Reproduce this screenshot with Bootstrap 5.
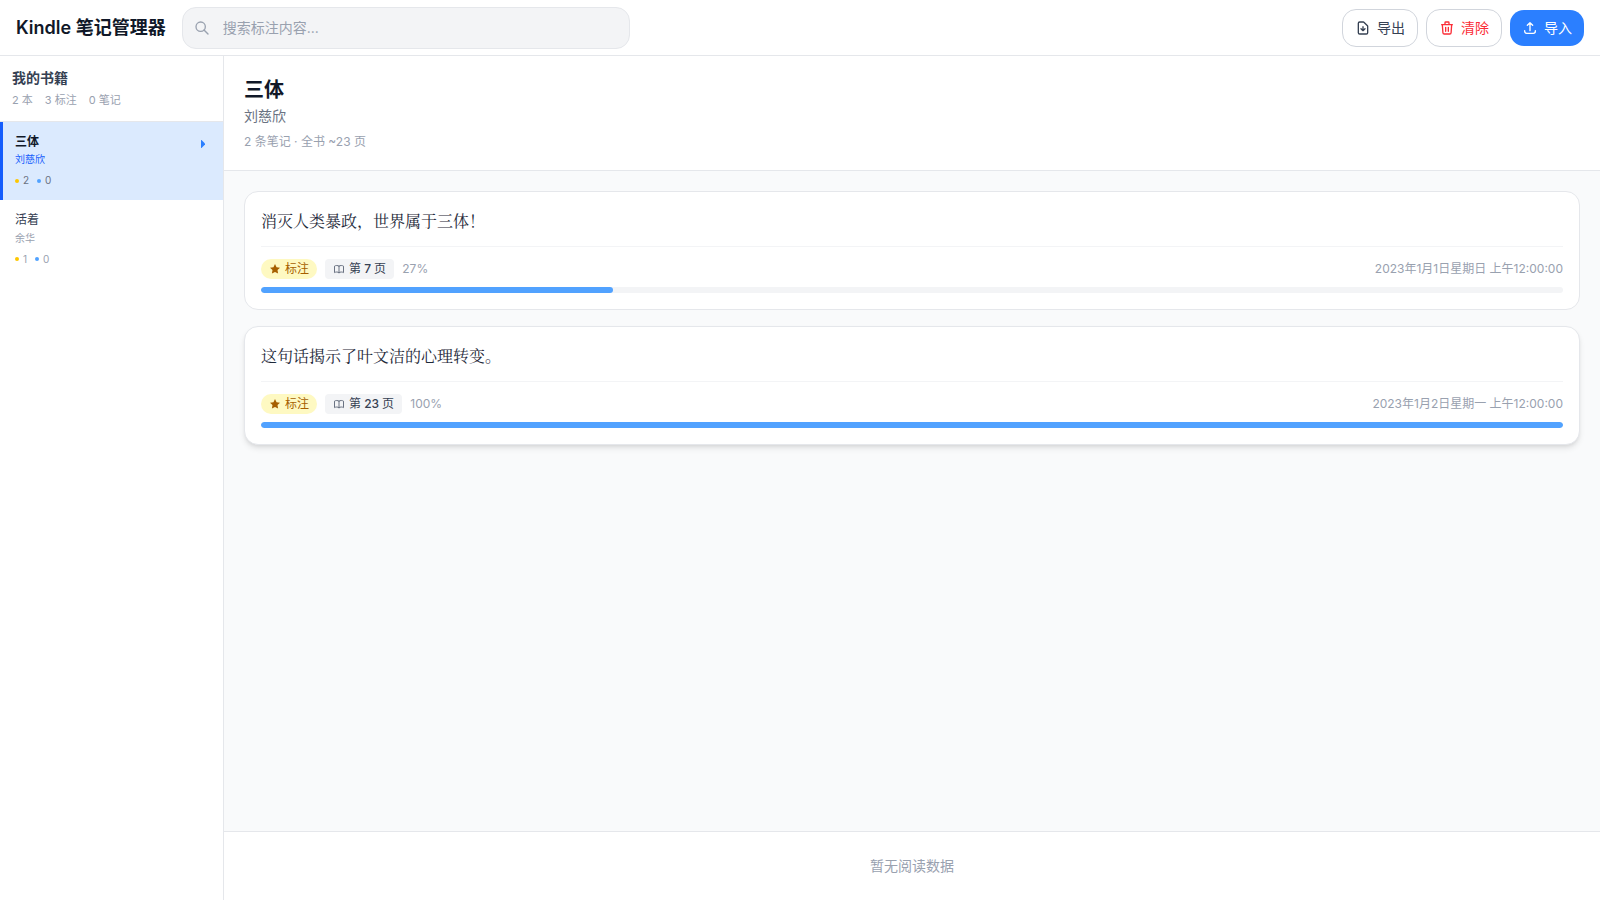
<!DOCTYPE html>
<html lang="zh-CN">
<head>
<meta charset="utf-8">
<meta name="viewport" content="width=device-width, initial-scale=1">
<title>Kindle 笔记管理器</title>
<link href="https://cdn.jsdelivr.net/npm/bootstrap@5.3.0/dist/css/bootstrap.min.css" rel="stylesheet">
<style>
body{font-family:Inter,"Noto Sans CJK SC",sans-serif;font-size:14px;line-height:20px;color:#101828}
svg{display:block;flex:none}
.app-header{height:56px;border-bottom:1px solid #e5e7eb}
.brand{font-size:18px;line-height:28px;font-weight:600}
.search-box{width:448px;height:42px;background:#f3f4f6;border:1px solid #e5e7eb;border-radius:14px;padding:0 11px;gap:13px;color:#99a1af}
.search-box input{color:#364153;font-size:14px;line-height:20px}
.search-box input::placeholder{color:#99a1af;opacity:1}
.tool-btn{--bs-btn-padding-x:12px;--bs-btn-padding-y:8px;--bs-btn-font-size:14px;--bs-btn-line-height:20px;--bs-btn-border-radius:14px;--bs-btn-color:#364153;--bs-btn-border-color:#d1d5dc;--bs-btn-bg:#fff;gap:6px}
.tool-danger{--bs-btn-color:#fb2c36}
.tool-primary{--bs-btn-color:#fff;--bs-btn-bg:#2b7fff;border:0}
.sidebar{width:224px;border-right:1px solid #e5e7eb}
.side-head{padding:12px;border-bottom:1px solid #e5e7eb}
.side-title{font-weight:600;color:#364153}
.side-stats{font-size:11px;line-height:16.5px;color:#99a1af;gap:12px;margin-top:4px}
.book{border-left:3px solid transparent;padding:11px 12px 10px;height:78.5px;color:#364153}
.book-title{font-size:12px;line-height:18px}
.book-author{font-size:10px;line-height:15px;color:#99a1af;margin-top:1.5px}
.book-stats{font-size:10px;line-height:15px;color:#99a1af;gap:8px;margin-top:6px}
.book-active{background:#dbeafe;border-left-color:#155dfc;color:#101828}
.book-active .book-title{font-weight:600}
.book-active .book-author{color:#155dfc}
.book-active .book-stats{color:#6a7282}
.chevron{margin:7.5px 6px 0 0}
.dot{width:4px;height:4px;border-radius:50%;background:#fdc700}
.dot-blue{background:#51a2ff}
.detail-head{padding:20px;border-bottom:1px solid #e5e7eb}
.detail-title{font-size:20px;line-height:28px;font-weight:700}
.detail-author{color:#6a7282;margin-top:2px}
.detail-meta{font-size:12px;line-height:16px;color:#99a1af}
.notes{background:#f9fafb;padding:20px;gap:16px}
.note{background:#fff;border:1px solid #e5e7eb;border-radius:14px;padding:16px}
.note-raised{box-shadow:0 4px 6px -1px rgba(0,0,0,.1),0 2px 4px -2px rgba(0,0,0,.1)}
.quote{font-family:"Noto Serif CJK SC","Noto Serif SC",serif;font-size:16px;line-height:26px;color:#1e2939}
.note-meta{border-top:1px solid #f3f4f6;margin-top:12px;padding-top:12px;gap:8px;font-size:12px;line-height:16px;color:#99a1af}
.tag{height:20px;padding:0 8px;gap:4px}
.tag-mark{background:#fef9c2;color:#a65f00;border-radius:10px}
.tag-page{background:#f3f4f6;color:#364153;border-radius:4px;font-weight:500;font-family:Inter,sans-serif}
.track{--bs-progress-height:6px;--bs-progress-bg:#f3f4f6;--bs-progress-bar-bg:#51a2ff;--bs-progress-border-radius:3px;margin-top:8px}
.track .progress-bar{border-radius:3px}
.stats-foot{border-top:1px solid #e5e7eb;padding:24px;color:#99a1af}
</style>
</head>
<body>
<div class="vh-100 d-flex flex-column overflow-hidden">
  <header class="app-header d-flex align-items-center px-3 gap-3 flex-shrink-0">
    <div class="brand">Kindle 笔记管理器</div>
    <label class="search-box d-flex align-items-center">
      <svg width="16" height="16" viewBox="0 0 24 24" fill="none" stroke="currentColor" stroke-width="2" stroke-linecap="round"><circle cx="10" cy="10" r="7"/><path d="M21 21l-6-6"/></svg>
      <input class="border-0 bg-transparent p-0 flex-grow-1" type="text" placeholder="搜索标注内容...">
    </label>
    <div class="d-flex align-items-center gap-2 ms-auto">
      <button class="btn tool-btn d-flex align-items-center"><svg width="16" height="16" viewBox="0 0 24 24" fill="none" stroke="currentColor" stroke-width="2" stroke-linecap="round" stroke-linejoin="round"><path d="M12 10v6m0 0l-3-3m3 3l3-3m2 8H7a2 2 0 01-2-2V5a2 2 0 012-2h5.586a1 1 0 01.707.293l5.414 5.414a1 1 0 01.293.707V19a2 2 0 01-2 2z"/></svg>导出</button>
      <button class="btn tool-btn tool-danger d-flex align-items-center"><svg width="16" height="16" viewBox="0 0 24 24" fill="none" stroke="currentColor" stroke-width="2" stroke-linecap="round" stroke-linejoin="round"><path d="M19 7l-.867 12.142A2 2 0 0116.138 21H7.862a2 2 0 01-1.995-1.858L5 7m5 4v6m4-6v6m1-10V4a1 1 0 00-1-1h-4a1 1 0 00-1 1v3M4 7h16"/></svg>清除</button>
      <button class="btn tool-btn tool-primary d-flex align-items-center"><svg width="16" height="16" viewBox="0 0 24 24" fill="none" stroke="currentColor" stroke-width="2" stroke-linecap="round" stroke-linejoin="round"><path d="M4 16v1a3 3 0 003 3h10a3 3 0 003-3v-1m-4-8l-4-4m0 0L8 8m4-4v12"/></svg>导入</button>
    </div>
  </header>
  <div class="d-flex flex-grow-1 overflow-hidden">
    <aside class="sidebar flex-shrink-0">
      <div class="side-head">
        <div class="side-title">我的书籍</div>
        <div class="side-stats d-flex"><span>2 本</span><span>3 标注</span><span>0 笔记</span></div>
      </div>
      <div class="book book-active d-flex">
        <div class="flex-grow-1">
          <div class="book-title">三体</div>
          <div class="book-author">刘慈欣</div>
          <div class="book-stats d-flex"><span class="d-flex align-items-center gap-1"><i class="dot"></i>2</span><span class="d-flex align-items-center gap-1"><i class="dot dot-blue"></i>0</span></div>
        </div>
        <svg class="chevron" width="4" height="8" viewBox="0 0 4 8" fill="#2b7fff"><path d="M0 0h.5L4 3.6v.8L.5 8H0z"/></svg>
      </div>
      <div class="book">
        <div class="book-title">活着</div>
        <div class="book-author">余华</div>
        <div class="book-stats d-flex"><span class="d-flex align-items-center gap-1"><i class="dot"></i>1</span><span class="d-flex align-items-center gap-1"><i class="dot dot-blue"></i>0</span></div>
      </div>
    </aside>
    <main class="flex-grow-1 d-flex flex-column">
      <div class="detail-head">
        <div class="detail-title">三体</div>
        <div class="detail-author">刘慈欣</div>
        <div class="detail-meta mt-2">2 条笔记 · 全书 ~23 页</div>
      </div>
      <div class="notes flex-grow-1 d-flex flex-column">
        <article class="note">
          <div class="quote">消灭人类暴政，世界属于三体！</div>
          <div class="note-meta d-flex align-items-center">
            <span class="tag tag-mark d-flex align-items-center"><svg width="12" height="12" viewBox="0 0 24 24" fill="currentColor"><path d="M12 2l3.09 6.26L22 9.27l-5 4.87 1.18 6.88L12 17.77l-6.18 3.25L7 14.14 2 9.27l6.91-1.01z"/></svg>标注</span>
            <span class="tag tag-page d-flex align-items-center"><svg width="12" height="12" viewBox="0 0 24 24" fill="none" stroke="#6a7282" stroke-width="2" stroke-linecap="round" stroke-linejoin="round"><path d="M12 6.253v13m0-13C10.832 5.477 9.246 5 7.5 5S4.168 5.477 3 6.253v13C4.168 18.477 5.754 18 7.5 18s3.332.477 4.5 1.253m0-13C13.168 5.477 14.754 5 16.5 5c1.747 0 3.332.477 4.5 1.253v13C19.832 18.477 18.247 18 16.5 18c-1.746 0-3.332.477-4.5 1.253"/></svg>第 7 页</span>
            <span>27%</span><span class="ms-auto">2023年1月1日星期日 上午12:00:00</span>
          </div>
          <div class="progress track"><div class="progress-bar" style="width:27%"></div></div>
        </article>
        <article class="note note-raised">
          <div class="quote">这句话揭示了叶文洁的心理转变。</div>
          <div class="note-meta d-flex align-items-center">
            <span class="tag tag-mark d-flex align-items-center"><svg width="12" height="12" viewBox="0 0 24 24" fill="currentColor"><path d="M12 2l3.09 6.26L22 9.27l-5 4.87 1.18 6.88L12 17.77l-6.18 3.25L7 14.14 2 9.27l6.91-1.01z"/></svg>标注</span>
            <span class="tag tag-page d-flex align-items-center"><svg width="12" height="12" viewBox="0 0 24 24" fill="none" stroke="#6a7282" stroke-width="2" stroke-linecap="round" stroke-linejoin="round"><path d="M12 6.253v13m0-13C10.832 5.477 9.246 5 7.5 5S4.168 5.477 3 6.253v13C4.168 18.477 5.754 18 7.5 18s3.332.477 4.5 1.253m0-13C13.168 5.477 14.754 5 16.5 5c1.747 0 3.332.477 4.5 1.253v13C19.832 18.477 18.247 18 16.5 18c-1.746 0-3.332.477-4.5 1.253"/></svg>第 23 页</span>
            <span>100%</span><span class="ms-auto">2023年1月2日星期一 上午12:00:00</span>
          </div>
          <div class="progress track"><div class="progress-bar" style="width:100%"></div></div>
        </article>
      </div>
      <div class="stats-foot text-center">暂无阅读数据</div>
    </main>
  </div>
</div>
<script src="https://cdn.jsdelivr.net/npm/bootstrap@5.3.0/dist/js/bootstrap.bundle.min.js"></script>
</body>
</html>
